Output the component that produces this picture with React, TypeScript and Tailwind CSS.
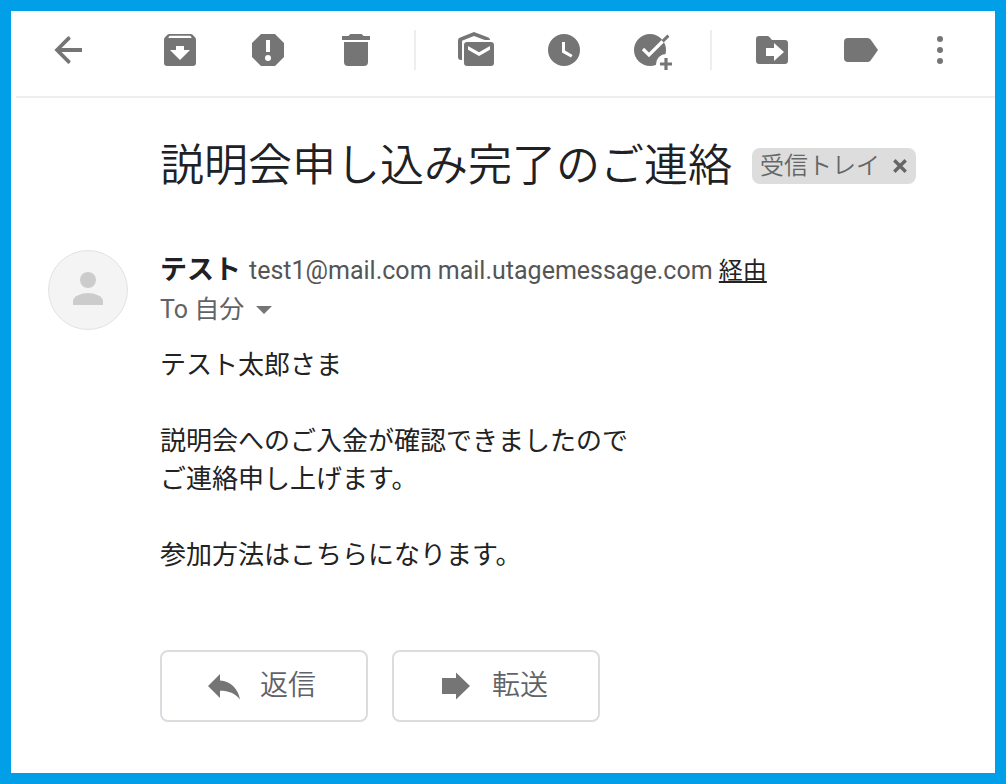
import type { ReactNode } from "react";

function Icon({ children }: { children: ReactNode }) {
  return (
    <svg viewBox="0 0 20 20" className="size-10 shrink-0" fill="currentColor" aria-hidden="true">
      {children}
    </svg>
  );
}

function ToolButton({ label, children }: { label: string; children: ReactNode }) {
  return (
    <button type="button" aria-label={label} className="shrink-0 text-[#757575]">
      <Icon>{children}</Icon>
    </button>
  );
}

function Separator() {
  return <div className="mr-10 ml-[38px] h-10 w-0.5 shrink-0 bg-[#eeeeee]" />;
}

function Toolbar() {
  return (
    <header className="ml-[5px] flex items-center border-b-2 border-[#eeeeee] pt-[19px] pr-8 pb-[26px] pl-8">
      <div className="mr-18 flex">
        <ToolButton label="戻る">
          <path
            d="M17 9H6.8l4.4-4.4a.5.5 0 0 0 0-.6l-.6-.7a.5.5 0 0 0-.7 0L3.2 10l6.7 6.7a.5.5 0 0 0 .7 0l.6-.7a.5.5 0 0 0 0-.6L6.800 11H17z"
          />
        </ToolButton>
      </div>
      <div className="flex gap-12">
        <ToolButton label="アーカイブ">
          <path
            fillRule="evenodd"
            d="M4.600 2h10.800q.5 0 .9.400l1.300 1.400q.4.400.4 1V16.400q0 1.600-1.600 1.600H3.600Q2 18 2 16.400V4.800q0-.6.400-1l1.300-1.400q.4-.4.900-.4zM5 2.900q-.7.200-.8 1.100h11.600q-.1-.9-.8-1.100zM8 8v2H5l5 5 5-5h-3V8z"
          />
        </ToolButton>
        <ToolButton label="迷惑メールを報告">
          <path
            fillRule="evenodd"
            d="M6.500 2h7L18 6.500v7L13.500 18h-7L2 13.500v-7zM9 5v6h2V5zM10 12.500a1.500 1.500 0 1 0 0 3 1.500 1.500 0 0 0 0-3z"
          />
        </ToolButton>
        <ToolButton label="削除">
          <path d="M3 3h3.200l1-1h5.600l1 1H17v2H3zM4 6h12v10q0 2-2 2H6q-2 0-2-2z" />
        </ToolButton>
      </div>
      <Separator />
      <div className="flex gap-12">
        <ToolButton label="未読にする">
          <path d="M17 5h-2.600L9 3 3 5.400V15h-.5Q1 15 1 13.500V5.100q0-.9.800-1.200L9 1l7.200 2.800q.8.400.8 1.200z" />
          <path
            fillRule="evenodd"
            d="M5.600 6h11.800Q19 6 19 7.600v8.800q0 1.600-1.600 1.600H5.600Q4 18 4 16.400V7.600Q4 6 5.600 6zM6 8v1.900l5.500 3.100L17 9.900V8l-5.500 3.100z"
          />
        </ToolButton>
        <ToolButton label="スヌーズ">
          <path
            fillRule="evenodd"
            d="M10 2a8 8 0 1 0 0 16 8 8 0 0 0 0-16zM9 6h1.500v4.300l3.800 2.200-.8 1.300L9 11.200z"
          />
        </ToolButton>
        <ToolButton label="ToDoリストに追加">
          <circle cx="9" cy="10" r="8" />
          <path d="M5.500 9.500l3 3 8-8" fill="none" stroke="white" strokeWidth="1.600" />
          <circle cx="17" cy="17" r="5" fill="white" />
          <path d="M15.300 5.700l2.900-2.900" fill="none" stroke="currentColor" strokeWidth="1.500" />
          <path d="M16.200 14h1.600v2.200H20v1.600h-2.200V20h-1.600v-2.200H14v-1.600h2.200z" />
        </ToolButton>
      </div>
      <Separator />
      <div className="flex gap-12">
        <ToolButton label="移動">
          <path
            fillRule="evenodd"
            d="M3.600 3h4q.6 0 1 .4L10 5h6.400Q18 5 18 6.600v8.800q0 1.600-1.600 1.600H3.600Q2 17 2 15.400V4.600Q2 3 3.600 3zM7 9v4h4v2.500l5-4.500-5-4.500V9z"
          />
        </ToolButton>
        <ToolButton label="ラベル">
          <path d="M4 4h9.700q1 0 1.600.8L19 10l-3.700 5.200q-.6.800-1.600.8H4q-2 0-2-2V6q0-2 2-2z" />
        </ToolButton>
      </div>
      <div className="ml-10 flex">
        <ToolButton label="その他">
          <circle cx="10" cy="4.500" r="1.500" />
          <circle cx="10" cy="10" r="1.500" />
          <circle cx="10" cy="15.500" r="1.500" />
        </ToolButton>
      </div>
    </header>
  );
}

function ActionButton({ label, children }: { label: string; children: ReactNode }) {
  return (
    <button
      type="button"
      className="flex h-18 items-center gap-4 rounded-lg border-2 border-[#dadce0] pr-[50px] pl-[42px] text-[28px] leading-10 font-[350] text-[#5f6368]"
    >
      <span className="text-[#757575]">
        <Icon>{children}</Icon>
      </span>
      {label}
    </button>
  );
}

export default function App() {
  return (
    <div className="flex min-h-screen flex-col border-[11px] border-[#009fe8] bg-white font-['Roboto','Noto_Sans_CJK_JP',sans-serif] text-[#202124]">
      <Toolbar />
      <main className="pr-8 pb-12 pl-[37px]">
        <div className="flex items-center gap-5 pt-9 pl-28">
          <h1 className="text-[44px] leading-16 font-[350]">説明会申し込み完了のご連絡</h1>
          <span className="flex h-9 shrink-0 items-center gap-3 rounded-lg bg-[#dddddd] px-2 text-2xl leading-9 font-[350] text-[#666666]">
            受信トレイ
            <button type="button" aria-label="ラベルを削除" className="shrink-0">
              <svg viewBox="0 0 16 16" className="size-4" fill="none" stroke="currentColor" strokeWidth="3.400" aria-hidden="true">
                <path d="M2.300 2.300l11.400 11.400M13.700 2.300L2.300 13.700" />
              </svg>
            </button>
          </span>
        </div>

        <article className="mt-13 flex items-start gap-8">
          <svg viewBox="0 0 80 80" className="size-20 shrink-0" role="img" aria-label="テスト">
            <circle cx="40" cy="40" r="39.500" fill="#f4f4f4" stroke="#e2e2e2" />
            <circle cx="40" cy="30" r="8" fill="#cccccc" />
            <path d="M25 55v-4c0-5 9-8 15-8s15 3 15 8v4z" fill="#cccccc" />
          </svg>
          <div className="min-w-0 flex-1">
            <div className="flex h-10 items-baseline">
              <h2 className="mr-2 text-[27px] leading-10 font-bold">テスト</h2>
              <p className="text-[25px] leading-10 text-[#555555]">
                test1@mail.com mail.utagemessage.com{" "}
                <a href="#via" className="text-2xl text-[#222222] underline decoration-2 underline-offset-2">
                  経由
                </a>
              </p>
            </div>
            <button type="button" className="flex h-10 items-center gap-3 text-[25px] leading-10 text-[#5f6368]">
              To 自分
              <svg viewBox="0 0 16 8" className="h-2 w-4" fill="#757575" aria-hidden="true">
                <path d="M0 0h16L8 8z" />
              </svg>
            </button>
            <div className="mt-4 text-[26px] leading-[38px] text-[#222222]">
              <p>テスト太郎さま</p>
              <p className="mt-[38px]">
                説明会へのご入金が確認できましたので
                <br />
                ご連絡申し上げます。
              </p>
              <p className="mt-[38px]">参加方法はこちらになります。</p>
            </div>
            <div className="mt-[76px] flex gap-6">
              <ActionButton label="返信">
                <path d="M2 10l6-6v3.300c5.500.4 9 4.200 10 9.400-2.500-3-5.500-4.300-10-4.300V16z" />
              </ActionButton>
              <ActionButton label="転送">
                <path d="M3 6h7V3.200l7 6.800-7 6.800V14H3z" />
              </ActionButton>
            </div>
          </div>
        </article>
      </main>
    </div>
  );
}
